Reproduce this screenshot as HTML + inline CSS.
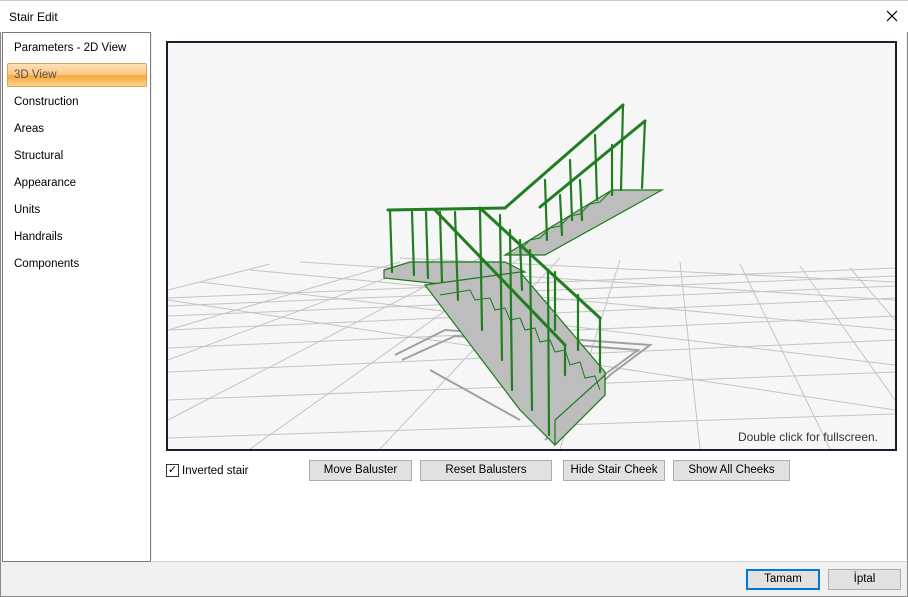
<!DOCTYPE html>
<html><head><style>
*{margin:0;padding:0;box-sizing:border-box}
body{width:908px;height:597px;overflow:hidden;background:#f0f0f0;font-family:"Liberation Sans",sans-serif;font-size:12px;color:#000;position:relative}
.win{position:absolute;left:0;top:0;width:908px;height:597px;border:1px solid #8a8a8a;border-top:none}
.title{position:absolute;left:0;top:0;width:908px;height:32px;background:#fff;border-top:1px solid #ccc}
.title span{position:absolute;left:9px;top:9px;font-size:12px}
.left{position:absolute;left:2px;top:32px;width:149px;height:530px;background:#fff;border:1px solid #7a7a7a}
.left .it{position:absolute;left:11px;font-size:11.5px}
.left .sel{position:absolute;left:4px;top:30px;width:140px;height:24px;border:1px solid #d9a35a;border-radius:2px;background:linear-gradient(#fde0b8 0%,#fbc988 45%,#f7a83a 55%,#fcd38c 100%)}
.right{position:absolute;left:152px;top:32px;width:754px;height:530px;background:#fff;border-bottom:1px solid #d0d0d0}
.vp{position:absolute;left:166px;top:41px;width:731px;height:410px;background:#f6f6f6;border:2px solid #1c1c2c}
.btn{position:absolute;top:460px;height:21px;background:#e1e1e1;border:1px solid #adadad;font-size:11.5px;text-align:center;line-height:19px}
.ok{position:absolute;top:569px;height:21px;background:#e1e1e1;border:1px solid #adadad;font-size:11.5px;text-align:center;line-height:19px}
</style></head><body>
<div class="win"></div>
<div class="title"><span>Stair Edit</span>
<svg style="position:absolute;left:886px;top:9px" width="12" height="12"><path d="M1 1L11 11M11 1L1 11" stroke="#000" stroke-width="1.2"/></svg></div>
<div class="left">
<div class="sel"></div>
<div class="it" style="top:9px">Parameters - 2D View</div>
<div class="it" style="top:36px;color:#555">3D View</div>
<div class="it" style="top:63px">Construction</div>
<div class="it" style="top:90px">Areas</div>
<div class="it" style="top:117px">Structural</div>
<div class="it" style="top:144px">Appearance</div>
<div class="it" style="top:171px">Units</div>
<div class="it" style="top:198px">Handrails</div>
<div class="it" style="top:225px">Components</div>
</div>
<div class="right"></div>
<div class="vp">
<svg width="727" height="406" viewBox="168 43 727 406" style="position:absolute;left:0;top:0">
<g stroke="#c4c4c4" stroke-width="1" fill="none">
<line x1="168" y1="298" x2="895" y2="268"/>
<line x1="168" y1="306" x2="895" y2="276"/>
<line x1="168" y1="316" x2="895" y2="286"/>
<line x1="168" y1="330" x2="895" y2="298"/>
<line x1="168" y1="348" x2="895" y2="316"/>
<line x1="168" y1="372" x2="895" y2="340"/>
<line x1="168" y1="400" x2="895" y2="372"/>
<line x1="168" y1="438" x2="895" y2="414"/>
<line x1="300" y1="262" x2="895" y2="300"/>
<line x1="250" y1="270" x2="895" y2="330"/>
<line x1="200" y1="282" x2="895" y2="365"/>
<line x1="168" y1="300" x2="895" y2="410"/>
<line x1="400" y1="258" x2="895" y2="282"/>
<line x1="480" y1="258" x2="168" y2="420"/>
<line x1="440" y1="258" x2="168" y2="360"/>
<line x1="400" y1="262" x2="168" y2="330"/>
<line x1="520" y1="258" x2="250" y2="449"/>
<line x1="560" y1="258" x2="380" y2="449"/>
<line x1="620" y1="260" x2="560" y2="449"/>
<line x1="680" y1="262" x2="700" y2="449"/>
<line x1="740" y1="264" x2="830" y2="449"/>
<line x1="800" y1="266" x2="895" y2="400"/>
<line x1="850" y1="268" x2="895" y2="320"/>
<line x1="270" y1="264" x2="168" y2="290"/>
</g>
<g stroke="#a0a0a0" fill="none" stroke-width="2">
<polyline points="395,355 445,330 650,345 610,375 545,440"/>
<polyline points="402,360 455,336 638,350 600,378"/>
<polyline points="430,370 520,420"/>
</g>
<g stroke="#1a7a1a" stroke-width="1.2" fill="#bdbdbd">
<polygon points="505,255 612,190 662,190 545,255"/>
<polygon points="384,270 410,262 505,262 525,272 440,284 384,278"/>
<polygon points="425,285 520,272 605,372 605,395 555,445 520,410"/>
<polygon points="555,445 605,395 605,375 555,420"/>
</g>
<g stroke="#1a7a1a" stroke-width="1" fill="none">
<polyline points="440,295 470,290 475,300 490,298 495,310 505,308 510,320 520,318 525,330 535,328 540,342 550,340 555,352 565,350 570,365 580,362 585,378 595,376 600,390"/>
<polyline points="520,250 530,240 540,238 550,228 560,226 570,216 580,214 590,204 600,202 610,192"/>
</g>
<g stroke="#217d21" stroke-width="3" fill="none" stroke-linecap="round">
<line x1="388" y1="210" x2="505" y2="208"/>
<line x1="505" y1="208" x2="623" y2="105"/>
<line x1="540" y1="207" x2="645" y2="121"/>
<line x1="435" y1="210" x2="565" y2="345"/>
<line x1="480" y1="208" x2="600" y2="318"/>
</g>
<g stroke="#217d21" stroke-width="2.2" fill="none" stroke-linecap="round">
<line x1="390" y1="210" x2="392" y2="272"/>
<line x1="412" y1="212" x2="414" y2="275"/>
<line x1="426" y1="212" x2="428" y2="278"/>
<line x1="440" y1="212" x2="442" y2="282"/>
<line x1="455" y1="212" x2="458" y2="300"/>
<line x1="480" y1="210" x2="482" y2="330"/>
<line x1="500" y1="215" x2="502" y2="360"/>
<line x1="510" y1="230" x2="512" y2="390"/>
<line x1="530" y1="250" x2="532" y2="410"/>
<line x1="548" y1="270" x2="549" y2="435"/>
<line x1="565" y1="345" x2="565" y2="375"/>
<line x1="600" y1="318" x2="600" y2="372"/>
<line x1="578" y1="295" x2="578" y2="350"/>
<line x1="555" y1="272" x2="555" y2="330"/>
<line x1="520" y1="240" x2="522" y2="290"/>
<line x1="545" y1="180" x2="547" y2="240"/>
<line x1="570" y1="160" x2="572" y2="220"/>
<line x1="595" y1="135" x2="597" y2="200"/>
<line x1="623" y1="105" x2="621" y2="190"/>
<line x1="645" y1="121" x2="642" y2="188"/>
<line x1="612" y1="145" x2="612" y2="195"/>
<line x1="580" y1="180" x2="582" y2="220"/>
<line x1="560" y1="195" x2="562" y2="235"/>
</g>
</svg>
<div style="position:absolute;right:17px;bottom:5px;font-size:12px;color:#333">Double click for fullscreen.</div>
</div>
<div style="position:absolute;left:166px;top:464px;width:13px;height:13px;border:1px solid #333;background:#fff;font-size:11px;line-height:11px;text-align:center">✓</div>
<div style="position:absolute;left:182px;top:465px;font-size:11.5px">Inverted stair</div>
<div class="btn" style="left:309px;width:103px">Move Baluster</div>
<div class="btn" style="left:420px;width:132px">Reset Balusters</div>
<div class="btn" style="left:563px;width:102px">Hide Stair Cheek</div>
<div class="btn" style="left:673px;width:117px">Show All Cheeks</div>
<div class="ok" style="left:746px;width:74px;border:2px solid #0078d7;line-height:17px">Tamam</div>
<div class="ok" style="left:828px;width:73px">İptal</div>
</body></html>
